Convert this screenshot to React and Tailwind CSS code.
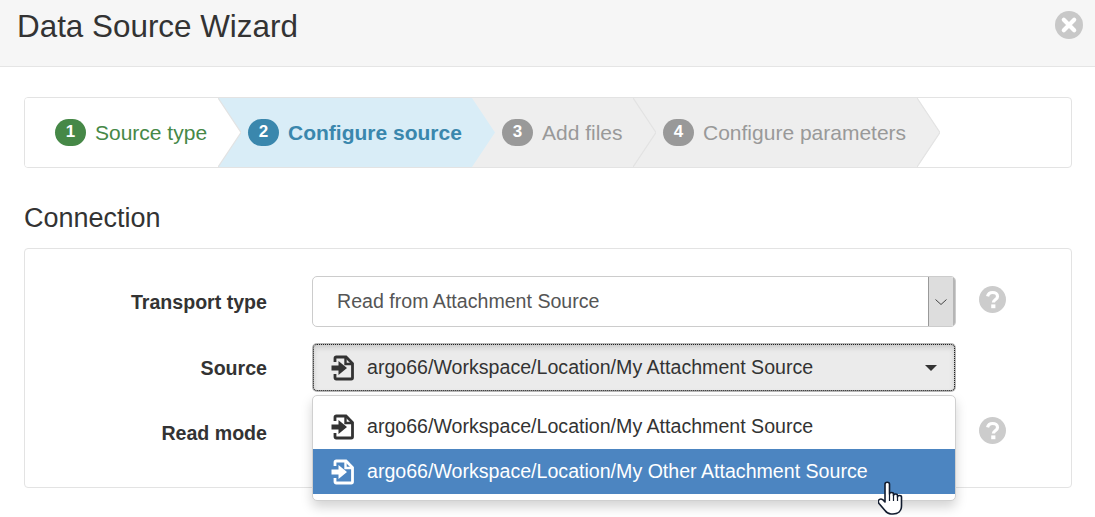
import React from "react";

const font = { fontFamily: '"Liberation Sans", Arial, sans-serif' };

function SourceIcon({ className }) {
  return (
    <svg viewBox="0 0 24 26" className={className} fill="none" stroke="currentColor">
      <path d="M4 7V3.2C4 2.5 4.5 2 5.2 2H15l6.5 6.5V22.8c0 .7-.5 1.2-1.2 1.2H5.2C4.5 24 4 23.5 4 22.8V19" strokeWidth="2.8" />
      <path d="M14.5 2.5V9H21" strokeWidth="2.4" />
      <path d="M0.5 10.500h7V6L16 13l-8.500 7V15.500h-7z" fill="currentColor" stroke="none" />
    </svg>
  );
}

function HelpIcon() {
  return (
    <svg viewBox="0 0 27 27" className="h-[27px] w-[27px]">
      <circle cx="13.5" cy="13.5" r="13.5" fill="#cccccc" />
      <path d="M8.6 10.4c.5-2.6 2.5-3.9 5-3.9 2.800 0 4.900 1.600 4.900 3.900 0 3.400-4.100 3.300-4.100 6" fill="none" stroke="#fff" strokeWidth="3.200" />
      <rect x="12.200" y="18.400" width="4.200" height="3.800" fill="#fff" />
    </svg>
  );
}

function CloseIcon() {
  return (
    <svg viewBox="0 0 28 28" className="mt-[11px] h-[28px] w-[28px]">
      <circle cx="14" cy="14" r="14" fill="#c8c8c8" />
      <path d="M8.800 8.800l10.400 10.400M19.200 8.800L8.800 19.200" stroke="#fff" strokeWidth="4.200" strokeLinecap="round" />
    </svg>
  );
}

function Step({ n, label, active, done, bg, badge, text, width, z }) {
  return (
    <div className={`relative flex h-full items-center pl-[30px] ${width} ${bg} ${z}`}>
      <span className={`flex h-[27px] w-[31px] shrink-0 items-center justify-center rounded-full pb-[2px] text-[17px] font-bold text-white ${badge}`}>{n}</span>
      <span className={`ml-[9px] whitespace-nowrap text-[21px] ${active ? "font-bold" : ""} ${text}`}>{label}</span>
      <svg viewBox="0 0 23 70" preserveAspectRatio="none" className="absolute top-0 left-full h-full w-[23px]">
        <polygon points="0,0 23,35 0,70" className={done ? "fill-white" : active ? "fill-[#d9edf7]" : "fill-[#eeeeee]"} />
        {!active && <polyline points="0,0 23,35 0,70" fill="none" stroke="#e2e2e2" strokeWidth="1.2" />}
      </svg>
    </div>
  );
}

function Row({ label, children, help, className }) {
  return (
    <div className={`flex items-center ${className}`}>
      <div className="w-[242px] shrink-0 pt-[2px] text-right text-[19.6px] font-bold text-[#333]">{label}</div>
      <div className="ml-[45px] w-[644px] shrink-0">{children}</div>
      <div className="mb-[4px] ml-[23px] flex w-[27px] justify-center">{help && <HelpIcon />}</div>
    </div>
  );
}

export default function App() {
  return (
    <div style={font} className="h-[517px] w-[1095px] overflow-hidden bg-white text-[#333]">
      <header className="flex h-[67px] items-start justify-between border-b border-[#e5e5e5] bg-[#f6f6f6] pr-[12px] pl-[17px]">
        <h1 className="mt-[7px] text-[31.4px] leading-[40px] font-normal text-[#333]">Data Source Wizard</h1>
        <CloseIcon />
      </header>

      <main className="pt-[30px] pr-[23px] pl-[24px]">
        <div className="flex h-[71px] overflow-hidden rounded border border-[#e3e3e3] bg-white">
          <Step n="1" label="Source type" done bg="bg-white" badge="bg-[#468847]" text="text-[#468847]" width="w-[193px]" z="z-40" />
          <Step n="2" label="Configure source" active bg="bg-[#d9edf7]" badge="bg-[#3a87ad]" text="text-[#3a87ad]" width="w-[254px]" z="z-30" />
          <Step n="3" label="Add files" bg="bg-[#eeeeee]" badge="bg-[#999999]" text="text-[#999999]" width="w-[161px]" z="z-20" />
          <Step n="4" label="Configure parameters" bg="bg-[#eeeeee]" badge="bg-[#999999]" text="text-[#999999]" width="w-[284px]" z="z-10" />
        </div>

        <h2 className="mt-[33px] text-[27px] leading-[34px] font-normal text-[#333]">Connection</h2>

        <section className="mt-[13px] h-[240px] rounded border border-[#e3e3e3] bg-white pt-[27px]">
          <Row label="Transport type" help className="h-[51px]">
            <div className="flex h-[51px] overflow-hidden rounded-[5px] border border-[#ccc] bg-white">
              <div className="flex flex-1 items-center pt-[1px] pl-[24px] text-[19.6px] text-[#555]">Read from Attachment Source</div>
              <div className="flex w-[27px] items-center justify-center border-r-2 border-l border-r-[#b5b5b5] border-l-[#999999] bg-[#dddddd]">
                <svg viewBox="0 0 12 6" className="h-[6px] w-[12px]" fill="none" stroke="#444" strokeWidth="1"><path d="M0.5 0.5L6 5.5l5.500-5" /></svg>
              </div>
            </div>
          </Row>

          <Row label="Source" className="mt-[16px] h-[49px]">
            <div className="flex h-[49px] items-center rounded-[5px] border-2 border-[#b8b8b8] bg-[#ebebeb] pr-[17px] pl-[17px] text-[19.6px] text-[#333] shadow-[inset_0_3px_5px_rgba(0,0,0,0.125)] outline-1 outline-offset-[-2px] outline-[#222] outline-dotted">
              <SourceIcon className="h-[26px] w-[24px] shrink-0 text-[#333]" />
              <span className="ml-[12px] flex-1 whitespace-nowrap">argo66/Workspace/Location/My Attachment Source</span>
              <span className="h-0 w-0 border-x-[6px] border-t-[6px] border-x-transparent border-t-[#333]" />
            </div>
          </Row>

          <div className="relative">
            <Row label="Read mode" help className="mt-[16px] h-[49px]">
              <div className="h-[49px]" />
            </Row>
            <div className="absolute top-[-13px] left-[287px] z-50 h-[106px] w-[644px] rounded-[5px] border border-[#d0d0d0] bg-white pt-[8px] text-[19.6px] shadow-[0_6px_12px_rgba(0,0,0,0.175)]">
              <div className="flex h-[45px] items-center pl-[18px] text-[#333]">
                <SourceIcon className="h-[26px] w-[24px] shrink-0 text-[#333]" />
                <span className="ml-[12px] whitespace-nowrap">argo66/Workspace/Location/My Attachment Source</span>
              </div>
              <div className="flex h-[45px] items-center bg-[#4c85c1] pl-[18px] text-white">
                <SourceIcon className="h-[26px] w-[24px] shrink-0 text-white" />
                <span className="ml-[12px] whitespace-nowrap">argo66/Workspace/Location/My Other Attachment Source</span>
              </div>
              <svg viewBox="0 0 26 34" className="absolute top-[85px] left-[565px] h-[34px] w-[26px]">
                <path d="M7 3.200C7 .5 11.500 .5 11.500 3.200V13C11.500 11 15.500 11 15.500 13V14.500C15.500 12.500 19.500 12.500 19.500 14.500V16C19.500 14 23.500 14 23.500 16V25C23.500 30 20 33 15 33H13C10 33 8.500 31.500 7 29.500L1 22.500C-.5 20.500 .5 18 3 18C4 18 5.500 19 7 21Z" fill="#fff" stroke="#111b2e" strokeWidth="1.600" strokeLinejoin="round" />
                <path d="M11.500 13V20M15.500 14.500V20M19.500 16V20" stroke="#111b2e" strokeWidth="1.200" />
              </svg>
            </div>
          </div>
        </section>
      </main>
    </div>
  );
}
